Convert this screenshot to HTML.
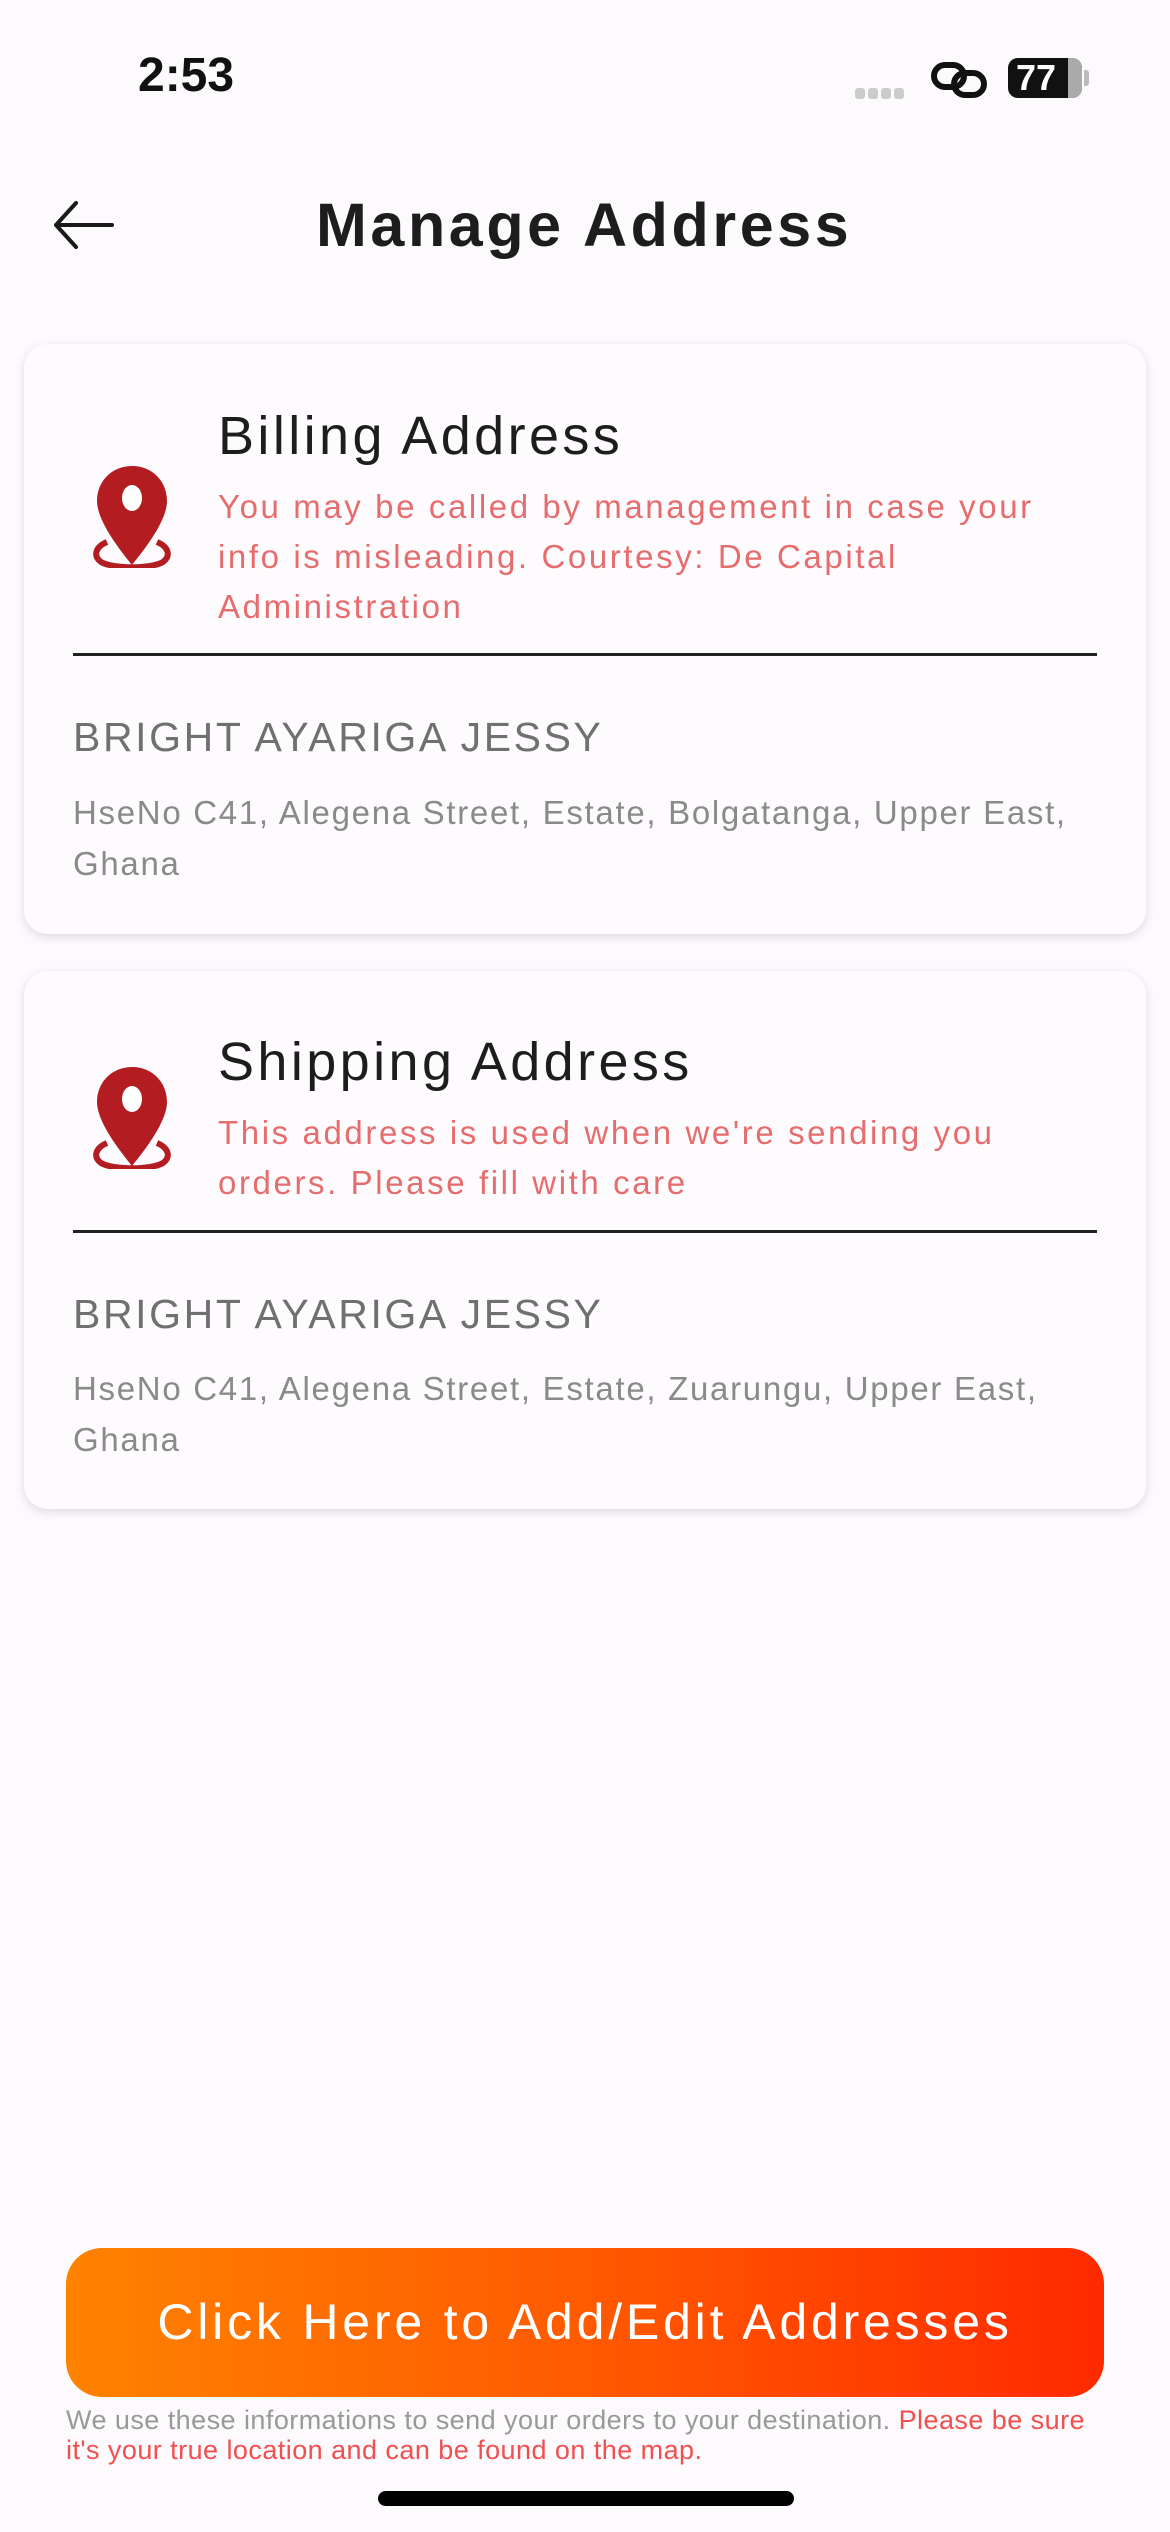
<!DOCTYPE html>
<html><head><meta charset="utf-8"><style>
*{margin:0;padding:0;box-sizing:border-box}
body{width:1170px;height:2532px;background:#fdfafd;font-family:"Liberation Sans",sans-serif;position:relative;overflow:hidden}
.a{position:absolute;white-space:nowrap}
.card{position:absolute;left:24px;width:1122px;background:#fefbfe;border-radius:24px;box-shadow:0 3px 10px rgba(0,0,0,0.13)}
.h{font-size:54px;color:#1d1d1d;font-weight:300;letter-spacing:3.4px}
.r{font-size:33px;color:#e66d6d;line-height:50px;white-space:normal;width:880px;letter-spacing:2.6px}
.n{font-size:41px;color:#707070;letter-spacing:2.6px}
.ad{font-size:33px;color:#8a8a8a;line-height:51px;white-space:normal;width:1050px;letter-spacing:1.7px}
.div{position:absolute;left:49px;width:1024px;height:3px;background:#222}
</style></head><body>
<div class="a" style="left:138px;top:48px;font-size:48px;font-weight:bold;color:#111">2:53</div>
<div class="a" style="left:855px;top:86px;width:60px;height:10px">
 <span style="display:inline-block;width:10px;height:11px;background:#ccc;border-radius:3px;margin-right:3px"></span><span style="display:inline-block;width:10px;height:11px;background:#ccc;border-radius:3px;margin-right:3px"></span><span style="display:inline-block;width:10px;height:11px;background:#ccc;border-radius:3px;margin-right:3px"></span><span style="display:inline-block;width:10px;height:11px;background:#ccc;border-radius:3px"></span></div>
<svg class="a" style="left:930px;top:60px" width="60" height="40" viewBox="0 0 60 40"><g fill="none" stroke="#111" stroke-width="6"><rect x="4" y="5" width="30" height="22" rx="11"/><rect x="24" y="13" width="30" height="22" rx="11"/></g></svg>
<div class="a" style="left:1008px;top:58px;width:74px;height:40px;background:#111;border-radius:10px;color:#fff;font-weight:bold;font-size:36px;line-height:40px;padding-left:8px;overflow:hidden">77<span style="position:absolute;right:0;top:0;width:14px;height:40px;background:#aaa"></span></div>
<div class="a" style="left:1084px;top:70px;width:5px;height:16px;background:#bbb;border-radius:0 3px 3px 0"></div>

<svg class="a" style="left:52px;top:200px" width="64" height="50" viewBox="0 0 64 50"><g fill="none" stroke="#1a1a1a" stroke-width="4" stroke-linecap="round" stroke-linejoin="round"><path d="M60 25H4M24 3L4 25L24 47"/></g></svg>
<div class="a" style="left:316px;top:190px;font-size:61px;font-weight:bold;color:#1d1d1d;letter-spacing:3.6px">Manage Address</div>

<div class="card" style="top:344px;height:590px">
 <svg class="a" style="left:65px;top:120px" width="86" height="104" viewBox="0 0 86 104"><path d="M43 2C23 2 8 17 8 37c0 22 28 55 35 64 7-9 35-42 35-64C78 17 63 2 43 2z" fill="#b31d21"/><ellipse cx="43" cy="34" rx="10" ry="13" fill="#fff"/><path d="M18 78C6 83 4 92 12 98c12 7 50 7 62 0 8-6 6-15-6-20" fill="none" stroke="#b31d21" stroke-width="6"/></svg>
 <div class="a h" style="left:194px;top:61px">Billing Address</div>
 <div class="a r" style="left:194px;top:138px">You may be called by management in case your info is misleading. Courtesy: De Capital Administration</div>
 <div class="div" style="top:309px"></div>
 <div class="a n" style="left:49px;top:370px">BRIGHT AYARIGA JESSY</div>
 <div class="a ad" style="left:49px;top:443px">HseNo C41, Alegena Street, Estate, Bolgatanga, Upper East, Ghana</div>
</div>

<div class="card" style="top:971px;height:538px">
 <svg class="a" style="left:65px;top:94px" width="86" height="104" viewBox="0 0 86 104"><path d="M43 2C23 2 8 17 8 37c0 22 28 55 35 64 7-9 35-42 35-64C78 17 63 2 43 2z" fill="#b31d21"/><ellipse cx="43" cy="34" rx="10" ry="13" fill="#fff"/><path d="M18 78C6 83 4 92 12 98c12 7 50 7 62 0 8-6 6-15-6-20" fill="none" stroke="#b31d21" stroke-width="6"/></svg>
 <div class="a h" style="left:194px;top:60px">Shipping Address</div>
 <div class="a r" style="left:194px;top:137px">This address is used when we're sending you orders. Please fill with care</div>
 <div class="div" style="top:259px"></div>
 <div class="a n" style="left:49px;top:320px">BRIGHT AYARIGA JESSY</div>
 <div class="a ad" style="left:49px;top:392px">HseNo C41, Alegena Street, Estate, Zuarungu, Upper East, Ghana</div>
</div>

<div class="a" style="left:66px;top:2248px;width:1038px;height:149px;border-radius:36px;background:linear-gradient(90deg,#ff8200,#ff5a00 50%,#ff2a00);color:#fff;font-size:50px;text-align:center;line-height:149px;letter-spacing:3.8px">Click Here to Add/Edit Addresses</div>
<div class="a" style="left:66px;top:2405px;width:1050px;white-space:normal;font-size:27px;line-height:30px;color:#999;font-weight:300;letter-spacing:0.45px">We use these informations to send your orders to your destination. <span style="color:#f05050">Please be sure it's your true location and can be found on the map.</span></div>
<div class="a" style="left:378px;top:2491px;width:416px;height:15px;background:#000;border-radius:8px"></div>
</body></html>
